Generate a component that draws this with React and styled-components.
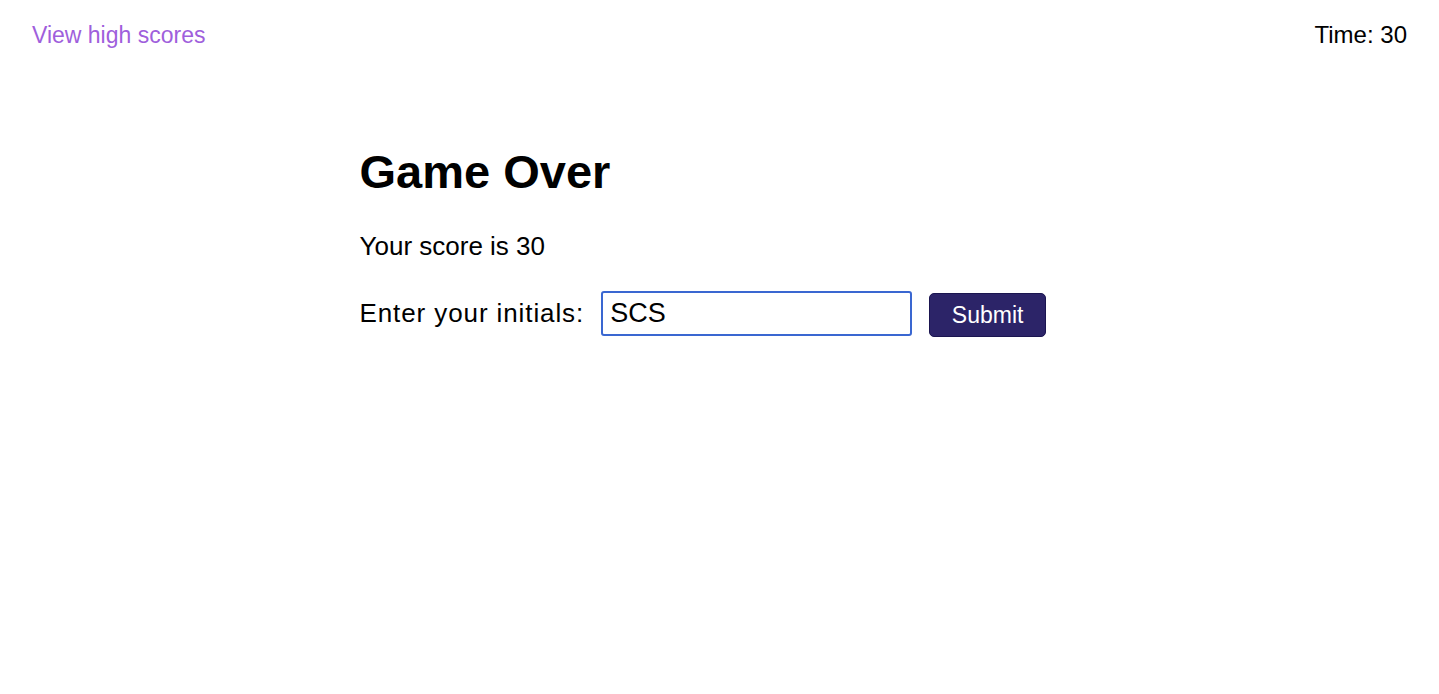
import React, { useState } from 'react';
import styled, { createGlobalStyle } from 'styled-components';

const GlobalStyle = createGlobalStyle`
	body {
		margin: 0;
		background: #fff;
		font-family: "Liberation Sans", Arial, Helvetica, sans-serif;
		color: #000;
	}
`;

const Header = styled.header`
	display: flex;
	justify-content: space-between;
	align-items: baseline;
	padding: 20px 32px;
	line-height: 29px;
`;

const HighScoresLink = styled.a`
	font-size: 23px;
	color: #9f5fdc;
	text-decoration: none;
	cursor: pointer;
`;

const Timer = styled.div`
	font-size: 24px;
	color: #000;
`;

const Main = styled.main`
	width: 720px;
	margin: 74px auto 0;
`;

const Title = styled.h1`
	margin: 0;
	font-size: 47px;
	font-weight: 700;
	line-height: 55px;
`;

const ScoreText = styled.p`
	margin: 33px 0 0;
	font-size: 26px;
	line-height: 28px;
`;

const Form = styled.form`
	display: flex;
	align-items: center;
	gap: 17px;
	margin-top: 30px;
`;

const Label = styled.label`
	font-size: 26px;
	letter-spacing: 0.9px;
	white-space: nowrap;
`;

const InitialsInput = styled.input`
	box-sizing: border-box;
	width: 311px;
	height: 45px;
	padding: 0 7px;
	border: 2px solid #3a67d1;
	border-radius: 3px;
	font-family: inherit;
	font-size: 27px;
	color: #000;
	outline: none;
`;

const SubmitButton = styled.button`
	box-sizing: border-box;
	width: 117px;
	height: 44px;
	margin-top: 3px;
	background: #2c2468;
	color: #fff;
	border: 1px solid #1b1550;
	border-radius: 5px;
	font-family: inherit;
	font-size: 23px;
	cursor: pointer;
`;

function App() {
	const [initials, setInitials] = useState('SCS');

	return (
		<>
			<GlobalStyle />
			<Header>
				<HighScoresLink>View high scores</HighScoresLink>
				<Timer>Time: 30</Timer>
			</Header>
			<Main>
				<Title>Game Over</Title>
				<ScoreText>Your score is 30</ScoreText>
				<Form
					onSubmit={(event) => {
						event.preventDefault();
					}}
				>
					<Label htmlFor='initials'>Enter your initials:</Label>
					<InitialsInput
						id='initials'
						value={initials}
						onChange={(event) => {
							setInitials(event.target.value);
						}}
					/>
					<SubmitButton type='submit'>Submit</SubmitButton>
				</Form>
			</Main>
		</>
	);
}

export default App;
